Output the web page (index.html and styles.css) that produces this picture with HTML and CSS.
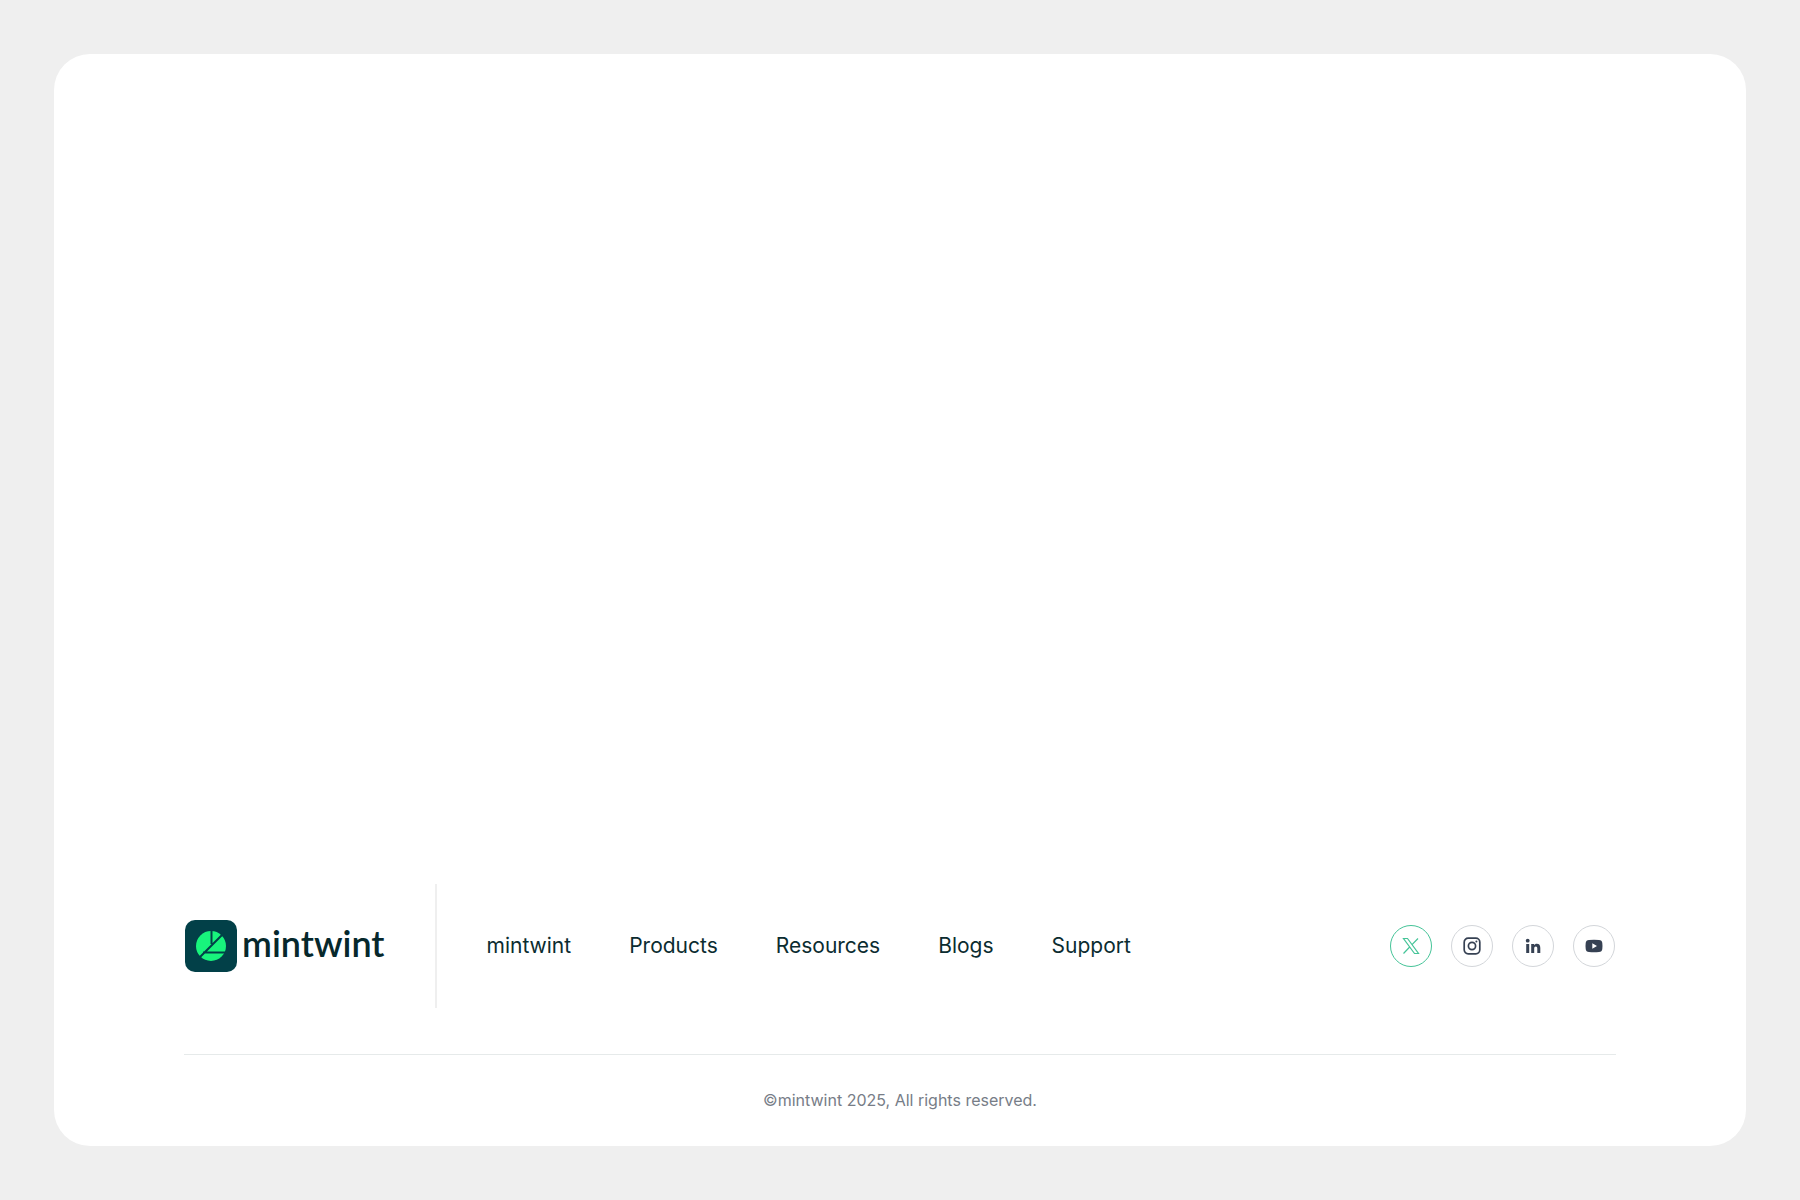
FILE: index.html
```
<!DOCTYPE html>
<html lang="en">

<head>
    <meta charset="utf-8">
    <meta name="viewport" content="width=device-width, initial-scale=1.0">
    <title>mintwint</title>
    <link rel="stylesheet" href="styles.css">
</head>

<body>
    <div class="page">
        <footer class="footer">
            <div class="footer-top">
                <a class="logo" href="#">
                    <svg class="logo-mark" viewBox="0 0 52 52" aria-hidden="true">
                        <rect width="52" height="52" rx="10" fill="#024048" />
                        <circle cx="26" cy="26" r="15" fill="#18f47c" />
                        <path d="M26.5 10v14M14 38l25-25M18 32.5h24" fill="none" stroke="#024048" stroke-width="2" />
                    </svg>
                    <span class="logo-text">mintwint</span>
                </a>
                <nav class="menu">
                    <a class="menu-item" href="#">mintwint</a>
                    <a class="menu-item" href="#">Products</a>
                    <a class="menu-item" href="#">Resources</a>
                    <a class="menu-item" href="#">Blogs</a>
                    <a class="menu-item" href="#">Support</a>
                </nav>
                <div class="social">
                    <a class="social-item active" href="#" aria-label="X">
                        <svg viewBox="0 0 18 18" fill="none" stroke="currentColor" stroke-width="1.2">
                            <path d="M1.5 1.5h4l11 15h-4zM1.5 16.5l6.2-6.5M10 7.7l6-6.2" />
                        </svg>
                    </a>
                    <a class="social-item" href="#" aria-label="Instagram">
                        <svg viewBox="0 0 18 18" fill="none" stroke="currentColor" stroke-width="1.7">
                            <rect x="1.2" y="1.2" width="15.6" height="15.6" rx="4" />
                            <circle cx="9" cy="9" r="3.6" />
                            <circle cx="13.4" cy="4.6" r="1" fill="currentColor" stroke="none" />
                        </svg>
                    </a>
                    <a class="social-item" href="#" aria-label="LinkedIn">
                        <svg viewBox="0 0 18 18" fill="currentColor">
                            <circle cx="3.7" cy="3.7" r="1.9" />
                            <path d="M2.2 7h3v9h-3zM7.2 7H10v1.3c.6-1 1.6-1.5 2.8-1.5 2.5 0 3.5 1.5 3.5 4.2v5h-3v-4.6c0-1.3-.4-2-1.5-2s-1.6.8-1.6 2V16h-3z" />
                        </svg>
                    </a>
                    <a class="social-item" href="#" aria-label="YouTube">
                        <svg viewBox="0 0 18 18" fill="currentColor">
                            <path fill-rule="evenodd" d="M4 3Q9 2.6 14 3Q17 3.2 17.3 6Q17.7 9 17.3 12Q17 14.8 14 15Q9 15.4 4 15Q1 14.8.7 12Q.3 9 .7 6Q1 3.2 4 3zM7.3 6.3v5.4L12 9z" />
                        </svg>
                    </a>
                </div>
            </div>
            <p class="copyright">©mintwint 2025, All rights reserved.</p>
        </footer>
    </div>
</body>

</html>
```
FILE: styles.css
```
* {
    box-sizing: border-box;
}

body {
    margin: 0;
    background-color: #efefef;
    font-family: "Inter", sans-serif;
    color: #0b2c30;
}

a {
    color: inherit;
    text-decoration: none;
}

.page {
    display: flex;
    flex-direction: column;
    justify-content: flex-end;
    min-height: calc(100vh - 108px);
    margin: 54px;
    padding: 0 130px;
    border-radius: 36px;
    background-color: #fff;
}

.footer-top {
    display: flex;
    flex-wrap: wrap;
    align-items: center;
    padding: 0 1px 46px;
    border-bottom: 1px solid #e6eaea;
}

.logo {
    display: flex;
    align-items: center;
    gap: 5px;
    height: 124px;
    padding-right: 50px;
    border-right: 2px solid #efefef;
}

.logo-mark {
    width: 52px;
    height: 52px;
}

.logo-text {
    padding-bottom: 6px;
    font-family: "Lato", sans-serif;
    font-size: 36px;
    font-weight: 600;
    line-height: 44px;
    color: #06282c;
}

.menu {
    display: flex;
    flex-wrap: wrap;
    gap: 58px;
    padding-left: 50px;
}

.menu-item {
    font-size: 21px;
    line-height: 28px;
}

.social {
    display: flex;
    gap: 19px;
    margin-left: auto;
}

.social-item {
    display: flex;
    align-items: center;
    justify-content: center;
    width: 42px;
    height: 42px;
    border: 1px solid #d3d6da;
    border-radius: 50%;
    color: #364153;
}

.social-item svg {
    width: 18px;
    height: 18px;
}

.social-item.active {
    border-color: #45c498;
    color: #45c498;
}

.copyright {
    margin: 0;
    padding: 33px 0 34px;
    font-size: 16px;
    line-height: 24px;
    text-align: center;
    color: #777d87;
}
```
